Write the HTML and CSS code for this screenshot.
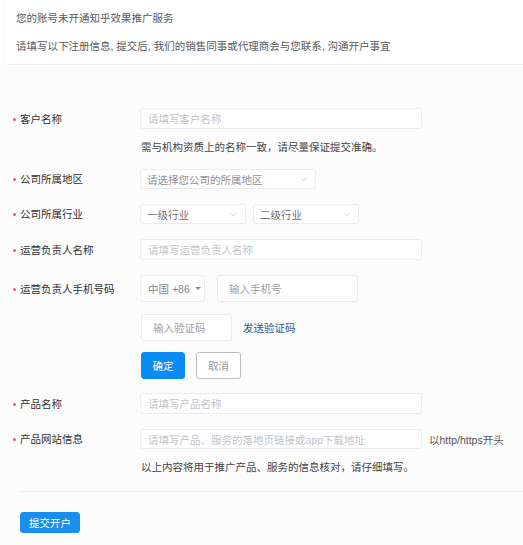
FILE: index.html
```html
<!DOCTYPE html>
<html lang="zh-CN">
<head>
<meta charset="utf-8">
<title>开户</title>
<link rel="stylesheet" href="styles.css">
</head>
<body>
<div class="header">
  <p class="h1">您的账号未开通知乎效果推广服务</p>
  <p class="h2">请填写以下注册信息, 提交后, 我们的销售同事或代理商会与您联系, 沟通开户事宜</p>
</div>
<div class="form">
  <div class="row r1">
    <label class="label">客户名称</label>
    <div class="input w-full"><span class="ph">请填写客户名称</span></div>
  </div>
  <p class="hint h-1">需与机构资质上的名称一致，请尽量保证提交准确。</p>

  <div class="row r2">
    <label class="label">公司所属地区</label>
    <div class="select w-region"><span class="sel-text">请选择您公司的所属地区</span><svg class="chev" viewBox="0 0 8 5" width="7" height="5"><polyline points="1,1 4,4 7,1" fill="none" stroke="#c4c4c4" stroke-width="1"/></svg></div>
  </div>

  <div class="row r3">
    <label class="label">公司所属行业</label>
    <div class="pair">
      <div class="select w-ind"><span class="sel-text dark">一级行业</span><svg class="chev" viewBox="0 0 8 5" width="7" height="5"><polyline points="1,1 4,4 7,1" fill="none" stroke="#c4c4c4" stroke-width="1"/></svg></div>
      <div class="select w-ind"><span class="sel-text dark">二级行业</span><svg class="chev" viewBox="0 0 8 5" width="7" height="5"><polyline points="1,1 4,4 7,1" fill="none" stroke="#c4c4c4" stroke-width="1"/></svg></div>
    </div>
  </div>

  <div class="row r4">
    <label class="label">运营负责人名称</label>
    <div class="input w-full"><span class="ph">请填写运营负责人名称</span></div>
  </div>

  <div class="row r5">
    <label class="label">运营负责人手机号码</label>
    <div class="phone">
      <div class="box country"><span class="cc">中国 +86</span><span class="caret"></span></div>
      <div class="box tel"><span class="ph2">输入手机号</span></div>
    </div>
  </div>

  <div class="row r6 indent">
    <div class="box code"><span class="ph2">输入验证码</span></div>
    <a class="send">发送验证码</a>
  </div>

  <div class="row r7 indent">
    <button class="btn primary">确定</button>
    <button class="btn ghost">取消</button>
  </div>

  <div class="row r8">
    <label class="label">产品名称</label>
    <div class="input w-full"><span class="ph">请填写产品名称</span></div>
  </div>

  <div class="row r9">
    <label class="label">产品网站信息</label>
    <div class="input w-full site"><span class="ph">请填写产品、服务的落地页链接或app下载地址</span></div>
    <span class="suffix">以http/https开头</span>
  </div>
  <p class="hint h-2">以上内容将用于推广产品、服务的信息核对，请仔细填写。</p>

  <div class="divider"></div>
  <button class="btn submit">提交开户</button>
</div>
</body>
</html>
```

FILE: styles.css
```css
* { box-sizing: border-box; }
html, body { margin: 0; padding: 0; }
body {
  width: 523px;
  height: 545px;
  overflow: hidden;
  background: #fcfcfd;
  font-family: "Liberation Sans", "Noto Sans CJK SC", sans-serif;
  font-size: 10.5px;
  color: #333;
}
p { margin: 0; }

.header {
  background: #ffffff;
  margin-left: 7px;
  padding-left: 9px;
  height: 65px;
  border-bottom: 1px solid #efeff2;
  color: #5a5a5a;
  line-height: 14px;
}
.header .h1 { padding-top: 11px; }
.header .h2 { margin-top: 14px; }

.form {
  padding-top: 43px;
}

.row {
  display: flex;
  align-items: center;
}
.indent { padding-left: 141px; }

.label {
  width: 140px;
  flex: none;
  padding-left: 20px;
  position: relative;
  color: #2f2f2f;
  line-height: 14px;
}
.label::before {
  content: "";
  position: absolute;
  left: 13px;
  top: 6px;
  width: 3px;
  height: 3px;
  border-radius: 50%;
  background: #f0566a;
}

.input, .select, .box {
  background: #ffffff;
  border: 1px solid #ececef;
  border-radius: 3px;
  display: flex;
  align-items: center;
}
.input { height: 21px; padding-left: 7px; }
.w-full { width: 282px; }
.ph { color: #c2c3c8; }

.select { height: 20px; padding: 0 8px 0 6px; justify-content: space-between; }
.w-region { width: 176px; }
.w-ind { width: 106px; }
.sel-text { color: #8e8e94; font-size: 10.5px; }
.sel-text.dark { color: #6f6f74; }
.chev { flex: none; }

.pair { display: flex; gap: 7px; }

.r1 { margin-top: 0; }
.hint {
  color: #444;
  line-height: 14px;
  padding-left: 141px;
}
.h-1 { margin-top: 11px; }
.r2 { margin-top: 15px; }
.r3 { margin-top: 15px; }
.r4 { margin-top: 15px; }
.r5 { margin-top: 15px; }
.r6 { margin-top: 12px; }
.r7 { margin-top: 11px; }
.r8 { margin-top: 14px; }
.r9 { margin-top: 15px; }
.r9 .input { height: 20px; }
.h-2 { margin-top: 11px; }

.phone { display: flex; gap: 12px; }
.box { height: 27px; }
.country { width: 65px; padding-left: 7px; gap: 5px; }
.cc { color: #8a8a8f; }
.caret {
  width: 0; height: 0;
  border-left: 3px solid transparent;
  border-right: 3px solid transparent;
  border-top: 3px solid #8a8a8f;
}
.tel { width: 141px; padding-left: 11px; }
.code { width: 91px; padding-left: 11px; }
.ph2 { color: #9d9ea3; }

.send {
  margin-left: 11px;
  color: #2b5a9a;
  cursor: pointer;
}

.btn {
  font-family: inherit;
  font-size: 10.5px;
  height: 27px;
  border-radius: 3px;
  padding: 0;
  cursor: pointer;
}
.primary {
  width: 44px;
  background: #0b8cf5;
  border: 1px solid #0b8cf5;
  color: #ffffff;
}
.ghost {
  width: 45px;
  margin-left: 11px;
  background: #ffffff;
  border: 1px solid #bdbdbd;
  color: #999;
}

.suffix {
  margin-left: 7px;
  color: #555;
}

.divider {
  margin-top: 17px;
  margin-left: 20px;
  border-top: 1px solid #eeeef1;
}

.submit {
  display: block;
  margin-top: 20px;
  margin-left: 20px;
  width: 60px;
  height: 21px;
  background: #1a8eea;
  border: 1px solid #1a8eea;
  color: #ffffff;
}
```
